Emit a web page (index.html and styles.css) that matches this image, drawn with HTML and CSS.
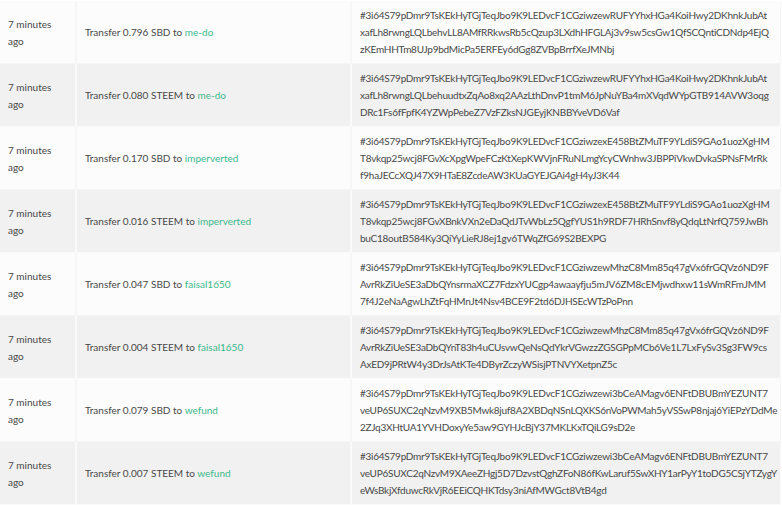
FILE: index.html
```html
<!DOCTYPE html>
<html>
<head>
<meta charset="utf-8">
<link rel="stylesheet" href="styles.css">
</head>
<body>
<table class="tx">
  <colgroup><col class="c-time"><col class="c-desc"><col class="c-memo"></colgroup>
  <tbody>
    <tr>
      <td class="time">7 minutes ago</td>
      <td class="desc">Transfer 0.796 SBD to <a class="user">me-do</a></td>
      <td class="memo">#3i64S79pDmr9TsKEkHyTGjTeqJbo9K9LEDvcF1CGziwzewRUFYYhxHGa4KoiHwy2DKhnkJubAt<br>xafLh8rwngLQLbehvLL8AMfRRkwsRb5cQzup3LXdhHFGLAj3v9sw5csGw1QfSCQntiCDNdp4EjQ<br>zKEmHHTm8UJp9bdMicPa5ERFEy6dGg8ZVBpBrrfXeJMNbj</td>
    </tr>
    <tr>
      <td class="time">7 minutes ago</td>
      <td class="desc">Transfer 0.080 STEEM to <a class="user">me-do</a></td>
      <td class="memo">#3i64S79pDmr9TsKEkHyTGjTeqJbo9K9LEDvcF1CGziwzewRUFYYhxHGa4KoiHwy2DKhnkJubAt<br>xafLh8rwngLQLbehuudtxZqAo8xq2AAzLthDnvP1tmM6JpNuYBa4mXVqdWYpGTB914AVW3oqg<br>DRc1Fs6fFpfK4YZWpPebeZ7VzFZksNJGEyjKNBBYveVD6Vaf</td>
    </tr>
    <tr>
      <td class="time">7 minutes ago</td>
      <td class="desc">Transfer 0.170 SBD to <a class="user">imperverted</a></td>
      <td class="memo">#3i64S79pDmr9TsKEkHyTGjTeqJbo9K9LEDvcF1CGziwzexE458BtZMuTF9YLdiS9GAo1uozXgHM<br>T8vkqp25wcj8FGvXcXpgWpeFCzKtXepKWVjnFRuNLmgYcyCWnhw3JBPPiVkwDvkaSPNsFMrRk<br>f9haJECcXQJ47X9HTaE8ZcdeAW3KUaGYEJGAi4gH4yJ3K44</td>
    </tr>
    <tr>
      <td class="time">7 minutes ago</td>
      <td class="desc">Transfer 0.016 STEEM to <a class="user">imperverted</a></td>
      <td class="memo">#3i64S79pDmr9TsKEkHyTGjTeqJbo9K9LEDvcF1CGziwzexE458BtZMuTF9YLdiS9GAo1uozXgHM<br>T8vkqp25wcj8FGvXBnkVXn2eDaQdJTvWbLz5QgfYUS1h9RDF7HRhSnvf8yQdqLtNrfQ759JwBh<br>buC18outB584Ky3QiYyLieRJ8ej1gv6TWqZfG69S2BEXPG</td>
    </tr>
    <tr>
      <td class="time">7 minutes ago</td>
      <td class="desc">Transfer 0.047 SBD to <a class="user">faisal1650</a></td>
      <td class="memo">#3i64S79pDmr9TsKEkHyTGjTeqJbo9K9LEDvcF1CGziwzewMhzC8Mm85q47gVx6frGQVz6ND9F<br>AvrRkZiUeSE3aDbQYnsrmaXCZ7FdzxYUCgp4awaayfju5mJV6ZM8cEMjwdhxw11sWmRFmJMM<br>7f4J2eNaAgwLhZtFqHMnJt4Nsv4BCE9F2td6DJHSEcWTzPoPnn</td>
    </tr>
    <tr>
      <td class="time">7 minutes ago</td>
      <td class="desc">Transfer 0.004 STEEM to <a class="user">faisal1650</a></td>
      <td class="memo">#3i64S79pDmr9TsKEkHyTGjTeqJbo9K9LEDvcF1CGziwzewMhzC8Mm85q47gVx6frGQVz6ND9F<br>AvrRkZiUeSE3aDbQYnT83h4uCUsvwQeNsQdYkrVGwzzZGSGPpMCb6Ve1L7LxFySv3Sg3FW9cs<br>AxED9jPRtW4y3DrJsAtKTe4DByrZczyWSisjPTNVYXetpnZ5c</td>
    </tr>
    <tr>
      <td class="time">7 minutes ago</td>
      <td class="desc">Transfer 0.079 SBD to <a class="user">wefund</a></td>
      <td class="memo">#3i64S79pDmr9TsKEkHyTGjTeqJbo9K9LEDvcF1CGziwzewi3bCeAMagv6ENFtDBUBmYEZUNT7<br>veUP6SUXC2qNzvM9XB5Mwk8juf8A2XBDqNSnLQXKS6nVoPWMah5yVSSwP8njaj6YiEPzYDdMe<br>2ZJq3XHtUA1YVHDoxyYe5aw9GYHJcBjY37MKLKxTQiLG9sD2e</td>
    </tr>
    <tr>
      <td class="time">7 minutes ago</td>
      <td class="desc">Transfer 0.007 STEEM to <a class="user">wefund</a></td>
      <td class="memo">#3i64S79pDmr9TsKEkHyTGjTeqJbo9K9LEDvcF1CGziwzewi3bCeAMagv6ENFtDBUBmYEZUNT7<br>veUP6SUXC2qNzvM9XAeeZHgj5D7DzvstQghZFoN86fKwLaruf5SwXHY1arPyY1toDG5CSjYTZygY<br>eWsBkjXfduwcRkVjR6EEiCQHKTdsy3niAfMWGct8VtB4gd</td>
    </tr>
  </tbody>
</table>
</body>
</html>
```

FILE: styles.css
```css
html, body {
  margin: 0;
  padding: 0;
  background: #ffffff;
}

body {
  font-family: "Lato", "Open Sans", sans-serif;
  font-size: 10px;
  color: #484848;
}

.tx {
  width: 780px;
  border-collapse: collapse;
  table-layout: fixed;
  margin-top: 1px;
}

.c-time { width: 76px; }
.c-desc { width: 275px; }
.c-memo { width: 429px; }

.tx td {
  padding: 6px 8px 5px 8px;
  line-height: 17px;
  vertical-align: middle;
  border: 1px solid #f6f6f6;
  border-left-width: 2px;
  border-top: none;
  border-bottom: 1px solid #f6f6f6;
}

.tx td:first-child { border-left: none; }

.tx tr:nth-child(odd) td { background: #fcfcfc; }
.tx tr:nth-child(even) td { background: #f1f1f1; border-color: #fafafa; }

.tx .memo {
  white-space: nowrap;
  letter-spacing: -0.25px;
}

.user {
  color: #3bb98c;
  text-decoration: none;
}
```
